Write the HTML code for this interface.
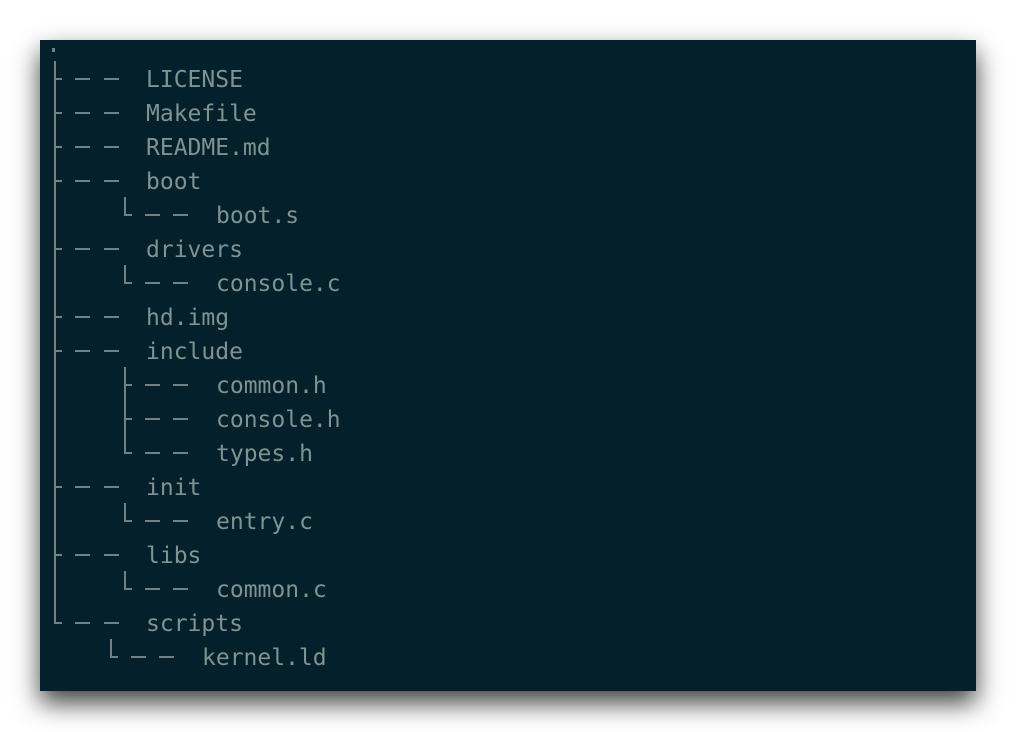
<!DOCTYPE html><html><head><style>
body{margin:0;width:1016px;height:732px;background:#fff;overflow:hidden;position:relative}
#p{position:absolute;left:40px;top:40px;width:936px;height:651px;background:#03202b;box-shadow:0 12px 24px rgba(0,0,0,.75)}
.t{position:absolute;font-family:"DejaVu Sans Mono","Liberation Mono",monospace;font-size:23px;color:#7f9393;line-height:34px;white-space:pre}
svg{position:absolute;left:0;top:0}
</style></head><body>
<div id="p"></div>
<svg width="1016" height="732" fill="#6f8285">
<rect x="52" y="48" width="3" height="4"/>
<rect x="54" y="61" width="2" height="563"/>
<g id="g"></g>
</svg>
<div id="txt"></div>
<script>
var rows=[["LICENSE",0],["Makefile",0],["README.md",0],["boot",0],["boot.s",1,1],["drivers",0],["console.c",1,1],["hd.img",0],["include",0],["common.h",1,0],["console.h",1,0],["types.h",1,1],["init",0],["entry.c",1,1],["libs",0],["common.c",1,1],["scripts",0],["kernel.ld",2,1]];
var s="",h="";
function r(x,y,w,hh){s+='<rect x="'+x+'" y="'+y+'" width="'+w+'" height="'+hh+'"/>';}
rows.forEach(function(a,i){var c=79+34*i;
 if(a[1]==0){r(56,c-1,6,2);r(75,c-1,15,2);r(104,c-1,15,2);h+='<div class="t" style="left:146px;top:'+(c-16)+'px">'+a[0]+'</div>';}
 else{var x=a[1]==1?124:110,d=a[1]==1?0:-14;
  r(x,c-1,8,2);r(145+d,c-1,15,2);r(173+d,c-1,15,2);
  h+='<div class="t" style="left:'+(216+d)+'px;top:'+(c-16)+'px">'+a[0]+'</div>';}
});
r(124,197,2,18);r(124,265,2,18);r(124,367,2,86);r(124,503,2,18);r(124,571,2,18);r(110,639,2,18);
document.getElementById('g').outerHTML=s;
document.getElementById('txt').innerHTML=h;
</script>
</body></html>
